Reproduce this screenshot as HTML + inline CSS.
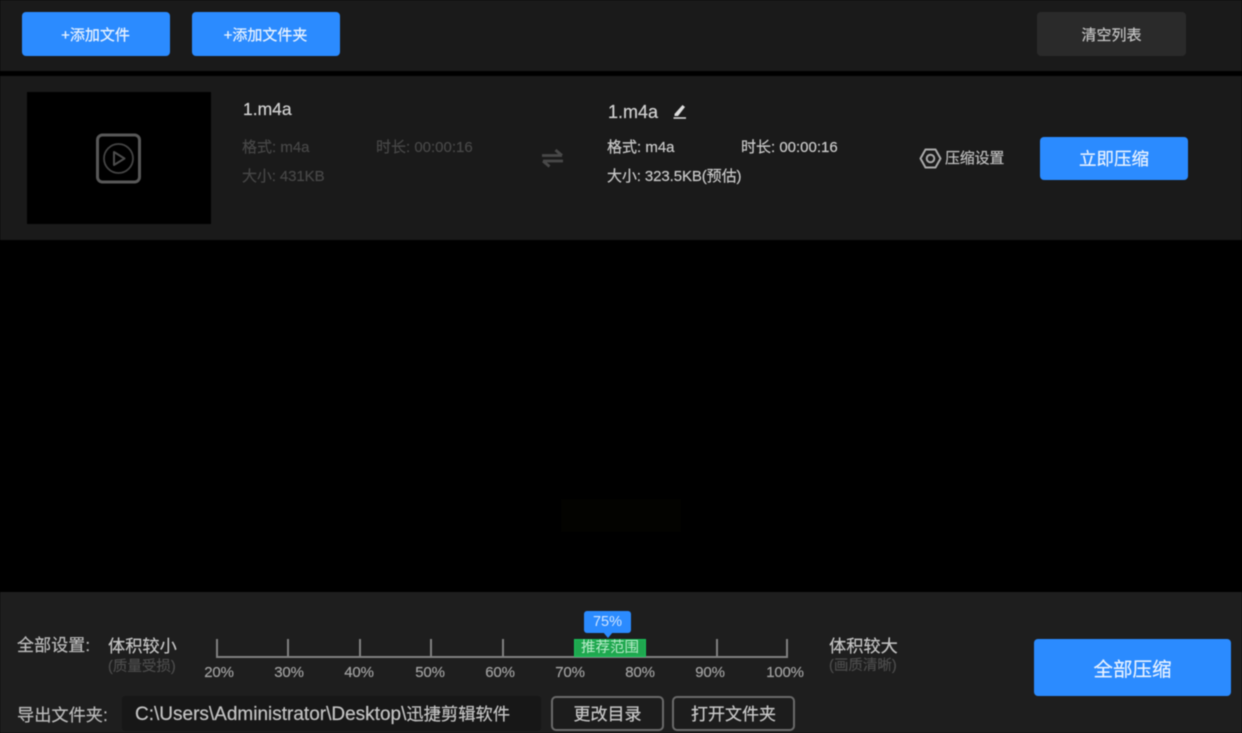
<!DOCTYPE html>
<html lang="zh"><head><meta charset="utf-8"><style>
*{box-sizing:border-box;margin:0;padding:0}
html,body{width:1242px;height:733px;overflow:hidden;background:#000}
body{position:relative;font-family:"Liberation Sans","Noto Sans CJK SC",sans-serif;color:#ddd}
#w{position:absolute;left:0;top:0;width:1242px;height:733px;filter:blur(.55px)}
.a{position:absolute}
.t{position:absolute;white-space:nowrap;line-height:20px;-webkit-text-stroke:.2px currentColor}
.b{position:absolute;display:flex;align-items:center;justify-content:center;background:#2b8bff;border-radius:4px;color:#e8f2ff;white-space:nowrap;-webkit-text-stroke:.2px currentColor}
.g{color:#474747}
.tick{position:absolute;top:639px;width:2px;height:18px;background:#808080}
.p{position:absolute;top:663px;width:50px;text-align:center;font-size:15px;line-height:20px;color:#a0a0a0;letter-spacing:-.2px;-webkit-text-stroke:.2px currentColor}
.o{position:absolute;top:696px;height:35px;border:2px solid #6a6a6a;border-radius:5px;display:flex;align-items:center;justify-content:center;font-size:17px;padding-bottom:2px;color:#c8c8c8;background:#1c1c1c;-webkit-text-stroke:.2px currentColor}
</style></head><body><div id="w">
<div class="a" style="left:0;top:0;width:1242px;height:71px;background:#1a1a1a"></div>
<div class="a" style="left:0;top:76px;width:1242px;height:164px;background:#1a1a1a"></div>
<div class="a" style="left:0;top:592px;width:1242px;height:141px;background:#1e1e1e"></div>
<div class="a" style="left:561px;top:499px;width:120px;height:33px;background:#030300"></div>

<div class="b" style="left:22px;top:12px;width:148px;height:44px;font-size:15px;padding-right:1px">+添加文件</div>
<div class="b" style="left:192px;top:12px;width:148px;height:44px;font-size:15px;padding-right:1px">+添加文件夹</div>
<div class="b" style="left:1037px;top:12px;width:149px;height:44px;font-size:15px;background:#2a2a2a;color:#c4c4c4">清空列表</div>

<div class="a" style="left:27px;top:92px;width:184px;height:132px;background:#000"></div>
<svg class="a" style="left:95px;top:133px" width="47" height="51" viewBox="0 0 47 51" fill="none" stroke="#585858">
<rect x="2.500" y="2" width="42" height="47" rx="5" stroke-width="3"/>
<circle cx="23.500" cy="25.500" r="14.500" stroke="#444" stroke-width="1.800"/>
<path d="M19 19v13l10.500-6.500z" stroke="#4c4c4c" stroke-width="2" stroke-linejoin="round"/></svg>

<div class="t" style="left:243px;top:99px;font-size:17.500px;color:#d0d0d0">1.m4a</div>
<div class="t g" style="left:242px;top:138px;font-size:15px">格式: m4a</div>
<div class="t g" style="left:376px;top:138px;font-size:15px">时长: 00:00:16</div>
<div class="t g" style="left:242px;top:167px;font-size:15px;letter-spacing:-.1px">大小: 431KB</div>

<svg class="a" style="left:540px;top:147px" width="25" height="22" viewBox="0 0 25 22" fill="none" stroke="#484848" stroke-width="2.800">
<path d="M2 8.500h20M15.500 3l6.500 5.500M23 14H3M9.500 19.500L3 14"/></svg>

<div class="t" style="left:608px;top:102px;font-size:18px;color:#d0d0d0">1.m4a</div>
<svg class="a" style="left:672px;top:103px" width="16" height="16" viewBox="0 0 16 16"><path d="M2.500 11L10.500 2l2.500 2L6 13H2.500z" fill="#ddd"/><path d="M1.500 15H14" stroke="#ddd" stroke-width="1.500"/></svg>
<div class="t" style="left:607px;top:138px;font-size:15px;color:#c8c8c8">格式: m4a</div>
<div class="t" style="left:741px;top:138px;font-size:15px;color:#c8c8c8">时长: 00:00:16</div>
<div class="t" style="left:607px;top:167px;font-size:15px;color:#c8c8c8;letter-spacing:-.1px">大小: 323.5KB(预估)</div>

<svg class="a" style="left:918px;top:146px" width="25" height="25" viewBox="0 0 25 25" fill="none" stroke="#aaa" stroke-width="2">
<path d="M7.500 3.500h10l5 9-5 9h-10l-5-9z" stroke-linejoin="round"/><circle cx="12.500" cy="12.500" r="3.800"/></svg>
<div class="t" style="left:945px;top:149px;font-size:15px;color:#bdbdbd;letter-spacing:-.2px">压缩设置</div>
<div class="b" style="left:1040px;top:137px;width:148px;height:43px;font-size:17.500px">立即压缩</div>

<div class="t" style="left:17px;top:636px;font-size:17px;color:#bbb;letter-spacing:.1px">全部设置:</div>
<div class="t" style="left:108px;top:636px;font-size:17.200px;color:#c4c4c4">体积较小</div>
<div class="t" style="left:108px;top:657px;font-size:14.500px;color:#4c4c4c">(质量受损)</div>

<div class="a" style="left:216px;top:656px;width:572px;height:2px;background:#808080"></div>
<div class="tick" style="left:216px"></div><div class="tick" style="left:287px"></div><div class="tick" style="left:359px"></div><div class="tick" style="left:430px"></div><div class="tick" style="left:502px"></div><div class="tick" style="left:716px"></div><div class="tick" style="left:786px"></div>
<div class="p" style="left:194px">20%</div><div class="p" style="left:264px">30%</div><div class="p" style="left:334px">40%</div><div class="p" style="left:405px">50%</div><div class="p" style="left:475px">60%</div><div class="p" style="left:545px">70%</div><div class="p" style="left:615px">80%</div><div class="p" style="left:685px">90%</div><div class="p" style="left:760px">100%</div>

<div class="a" style="left:574px;top:639px;width:72px;height:18px;background:#1fa84f;border:1px solid #19c35a;color:#b8ecca;font-size:14.500px;line-height:17px;text-align:center;white-space:nowrap">推荐范围</div>
<div class="a" style="left:584px;top:611px;width:47px;height:22px;background:#2b8bff;border-radius:3px;color:#cfe4ff;font-size:14.500px;line-height:22px;text-align:center">75%</div>
<div class="a" style="left:603px;top:632px;width:0;height:0;border-left:5px solid transparent;border-right:5px solid transparent;border-top:6px solid #2b8bff"></div>

<div class="t" style="left:829px;top:636px;font-size:17.200px;color:#c4c4c4">体积较大</div>
<div class="t" style="left:829px;top:656px;font-size:14.500px;color:#4c4c4c">(画质清晰)</div>
<div class="b" style="left:1034px;top:639px;width:197px;height:57px;font-size:19.500px">全部压缩</div>

<div class="t" style="left:17px;top:705px;font-size:17.200px;color:#bbb">导出文件夹:</div>
<div class="a" style="left:122px;top:696px;width:419px;height:35px;background:#171717;border-radius:3px"></div>
<div class="t" style="left:135px;top:704px;font-size:19px;color:#c4c4c4">C:\Users\Administrator\Desktop\<span style="font-size:17.300px">迅捷剪辑软件</span></div>
<div class="o" style="left:551px;width:113px">更改目录</div>
<div class="o" style="left:672px;width:123px">打开文件夹</div>
</div></body></html>
